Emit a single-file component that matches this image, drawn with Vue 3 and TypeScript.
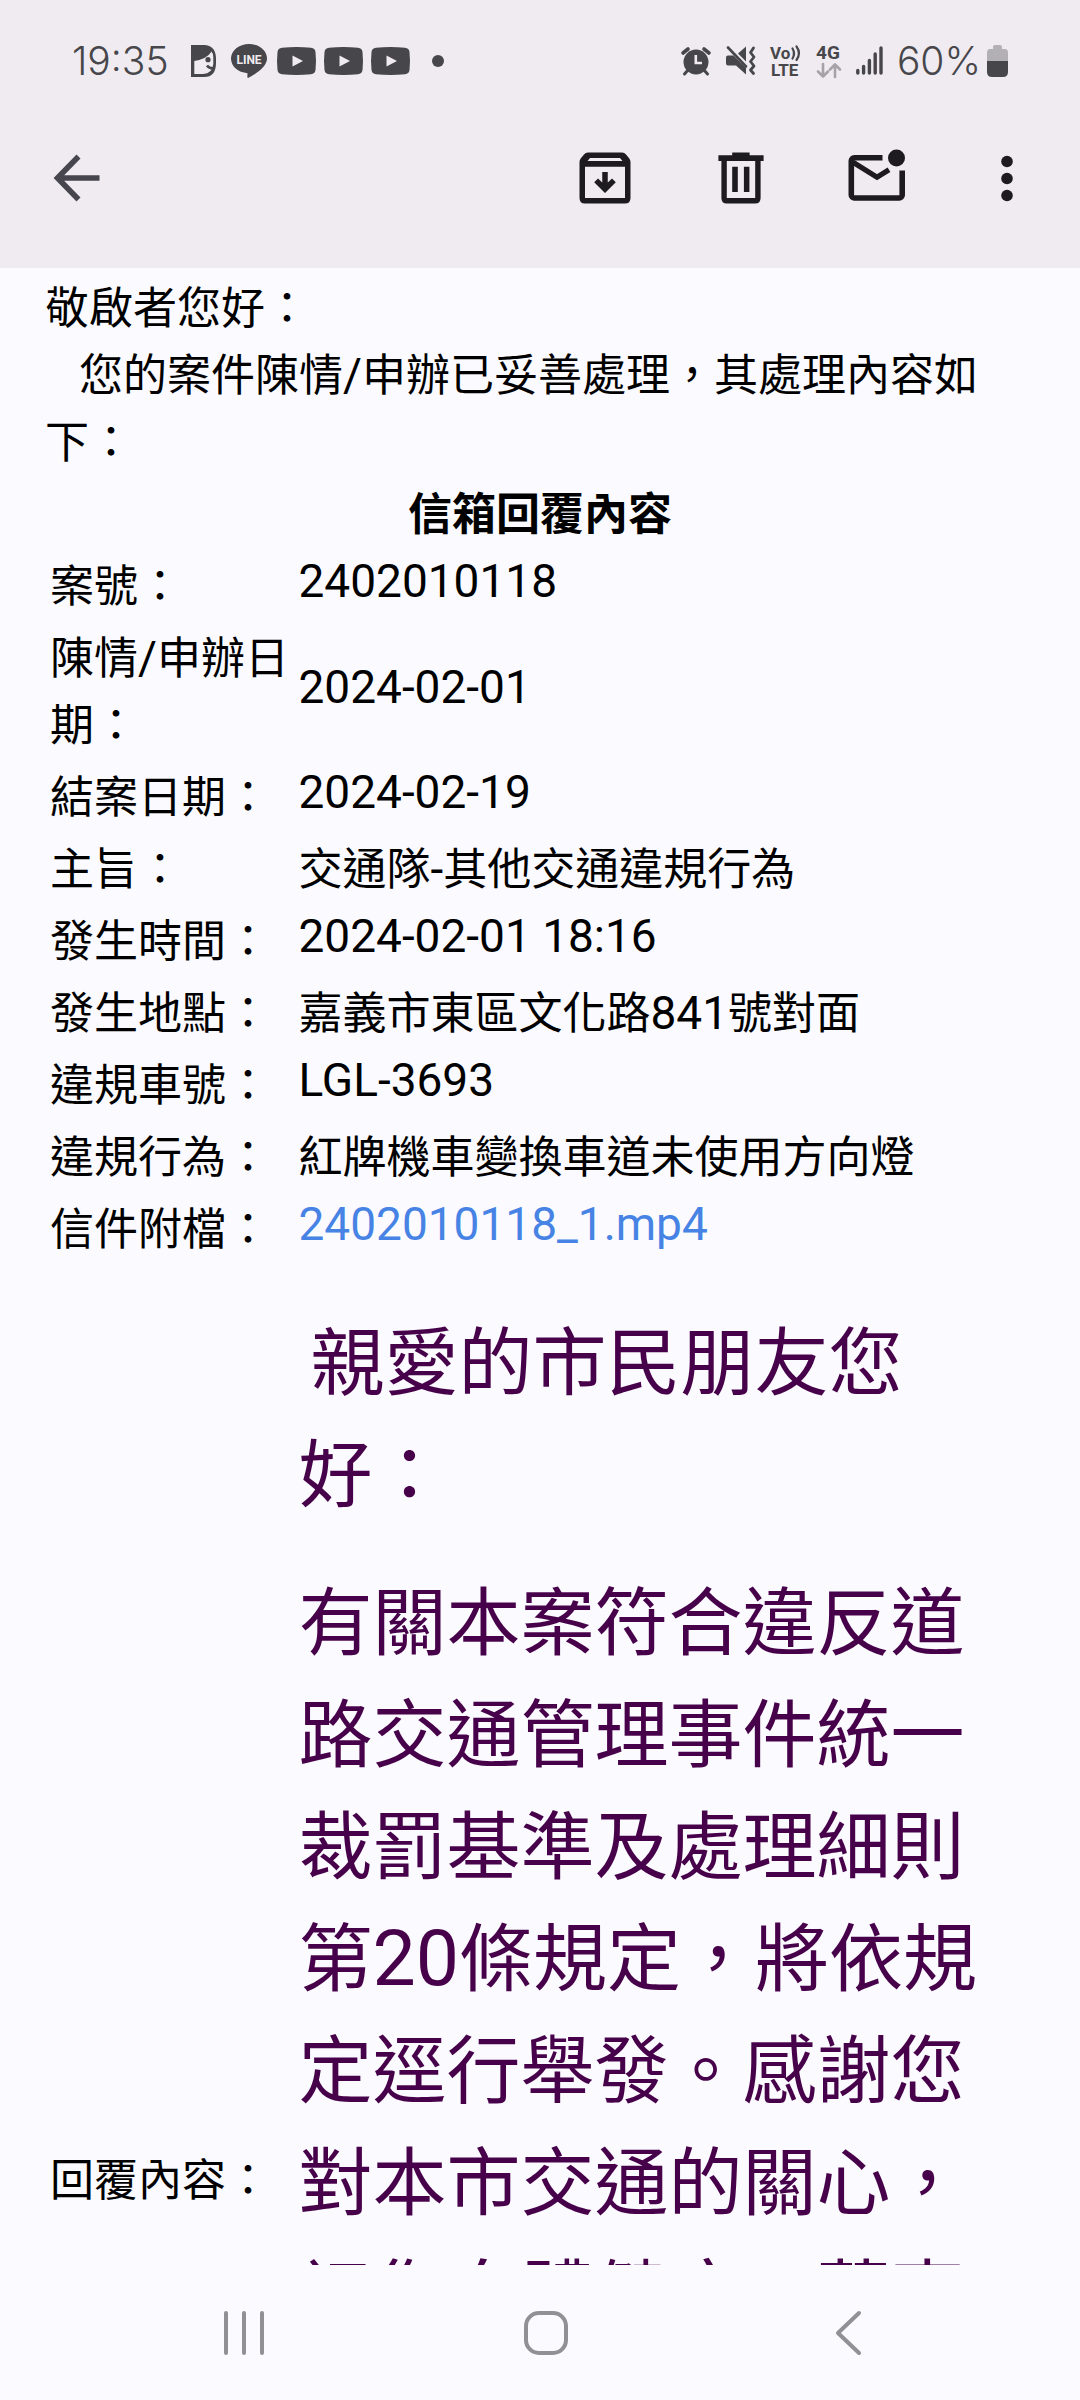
<script setup lang="ts">
interface Run {
  text: string
  latin: boolean
}

interface Field {
  label: string
  value: string
  href?: string
}

const greeting = '敬啟者您好：'
const intro = '您的案件陳情/申辦已妥善處理，其處理內容如下：'
const title = '信箱回覆內容'

const fields: Field[] = [
  { label: '案號：', value: '2402010118' },
  { label: '陳情/申辦日期：', value: '2024-02-01' },
  { label: '結案日期：', value: '2024-02-19' },
  { label: '主旨：', value: '交通隊-其他交通違規行為' },
  { label: '發生時間：', value: '2024-02-01 18:16' },
  { label: '發生地點：', value: '嘉義市東區文化路841號對面' },
  { label: '違規車號：', value: 'LGL-3693' },
  { label: '違規行為：', value: '紅牌機車變換車道未使用方向燈' },
  { label: '信件附檔：', value: '2402010118_1.mp4', href: '#attachment' },
]

const reply: string[] = [
  '親愛的市民朋友您好：',
  '有關本案符合違反道路交通管理事件統一裁罰基準及處理細則第20條規定，將依規定逕行舉發。感謝您對本市交通的關心，祝您身體健康，萬事如意。',
]

// Latin letters and digits are set one step larger than the Han text around them.
function runs(text: string): Run[] {
  const parts = text.match(/[\u0020-\u00ff]+|[^\u0020-\u00ff]+/g) ?? []
  return parts.map((part) => ({ text: part, latin: isLatin(part) }))
}

function isLatin(text: string): boolean {
  return /^[\u0020-\u00ff]+$/.test(text)
}
</script>

<template>
  <div class="screen">
    <header class="top">
      <div class="status">
        <div class="status-left">
          <time class="clock">19:35</time>
          <svg class="face" width="25" height="32" viewBox="0 0 25 32">
            <path d="M0 0H14Q25 1 25 14V18Q25 32 13 32H0Z" fill="#47464b" />
            <path d="M20.5 6.500Q16 14 3.300 16V29H12Q21.500 28.500 22.300 19V12Q22 8 20.500 6.500Z" fill="#efebf0" />
            <circle cx="17" cy="14.700" r="2.600" fill="#47464b" />
            <path d="M16 20.500Q18 23.300 22 23.300" fill="none" stroke="#47464b" stroke-width="2.600" />
          </svg>
          <svg class="line" width="36" height="34" viewBox="0 0 36 34">
            <path d="M18 0C28 0 36 6.500 36 14.600C36 22 27 29 17 34C16 34 16.500 31 16.500 29.200C7 28.500 0 22.500 0 14.600C0 6.500 8 0 18 0Z" fill="#47464b" />
            <text x="18" y="20" text-anchor="middle" font-size="12" font-weight="700" fill="#efebf0">LINE</text>
          </svg>
          <div class="tubes">
            <svg v-for="n in 3" :key="n" width="39" height="28" viewBox="0 0 39 28">
              <path d="M5 .8Q19.500-.8 34 .8Q38 1.200 38.500 5Q39.500 14 38.500 23Q38 26.800 34 27.200Q19.500 28.800 5 27.200Q1 26.800.5 23Q-.5 14 .5 5Q1 1.200 5 .8Z" fill="#47464b" />
              <path d="M15.500 8.500L26 14L15.500 19.500Z" fill="#efebf0" />
            </svg>
          </div>
          <svg class="dot" width="12" height="12" viewBox="0 0 12 12"><circle cx="6" cy="6" r="6" fill="#47464b" /></svg>
        </div>
        <div class="status-right">
          <svg width="30" height="28" viewBox="0 0 30 28">
            <circle cx="15" cy="15" r="12.500" fill="#47464b" />
            <path d="M2 6L7 2M28 6L23 2" stroke="#47464b" stroke-width="3.600" stroke-linecap="round" />
            <path d="M7 23L3.500 27M23 23L26.500 27" stroke="#47464b" stroke-width="3" stroke-linecap="round" />
            <path d="M14.800 8V16H21" fill="none" stroke="#efebf0" stroke-width="2.600" />
          </svg>
          <svg width="31" height="29" viewBox="0 0 31 29">
            <path d="M1 11.500Q1 9.500 3 9.500H8.500L21 22V28.500L11 19.500H3Q1 19.500 1 17.500Z" fill="#47464b" />
            <path d="M13 7.500L21 .5V15.500Z" fill="#47464b" />
            <path d="M3 1.500L21 20.500" stroke="#47464b" stroke-width="2.600" stroke-linecap="round" />
            <path d="M28.500 2L25.500 6.500L29 11L25.500 15.500L29 20L25.500 24L28.500 27.500" fill="none" stroke="#47464b" stroke-width="2.800" stroke-linejoin="round" stroke-linecap="round" />
          </svg>
          <svg width="32" height="32" viewBox="0 0 32 32">
            <text x="0" y="14" font-size="17" font-weight="700" fill="#47464b">Vo</text>
            <path d="M22.500 3.500Q25.500 8.500 22.500 13.500M26.500 1.500Q31.500 8.500 26.500 15" fill="none" stroke="#47464b" stroke-width="2.200" stroke-linecap="round" />
            <text x="1" y="31" font-size="17" font-weight="700" fill="#47464b">LTE</text>
          </svg>
          <svg width="26" height="34" viewBox="0 0 26 34">
            <text x="0" y="15" font-size="19" font-weight="700" fill="#47464b">4G</text>
            <path d="M7 20V32M2 27.500L7 32.500L12 27.500M19 33V21M14 25.500L19 20.500L24 25.500" fill="none" stroke="#a5a3a8" stroke-width="2.600" stroke-linecap="round" stroke-linejoin="round" />
          </svg>
          <svg width="27" height="29" viewBox="0 0 27 29">
            <path d="M1.800 24.500V27M7.600 20.500V27M13.400 14.500V27M19.200 8V27M25 2V27" fill="none" stroke="#47464b" stroke-width="3.400" stroke-linecap="round" />
          </svg>
          <div class="power">
            <span class="percent">60%</span>
            <svg width="21" height="32" viewBox="0 0 21 32">
              <path d="M6 2Q6 0 8 0H13Q15 0 15 2V4H18Q21 4 21 8V16H0V8Q0 4 3 4H6Z" fill="#b3b0b5" />
              <path d="M0 16H21V27Q21 32 16 32H5Q0 32 0 27Z" fill="#47464b" />
            </svg>
          </div>
        </div>
      </div>

      <nav class="appbar" aria-label="郵件操作">
        <button type="button" aria-label="返回">
          <svg width="66" height="66" viewBox="0 0 66 66">
            <path d="M55.500 33H15M34.500 11.500L13.500 33L34.500 54.500" fill="none" stroke="#47464f" stroke-width="5.600" />
          </svg>
        </button>
        <div class="actions">
          <button type="button" aria-label="封存">
            <svg width="66" height="66" viewBox="0 0 66 66" fill="#1d1b20">
              <path fill-rule="evenodd" d="M16 7.500H50Q52.500 7.500 54 9.500L57.300 13.500Q58.500 15 58.500 17V53Q58.500 58.500 53 58.500H13Q7.500 58.500 7.500 53V17Q7.500 15 8.700 13.500L12 9.500Q13.500 7.500 16 7.500ZM15.500 16H50.500L48 13H18ZM13 21.800V53H53V21.800Z" />
              <path d="M30.250 27H35.750V37.500L40 33.500L43.800 37.300L33 48L22.200 37.300L26 33.500L30.250 37.500Z" />
            </svg>
          </button>
          <button type="button" aria-label="刪除">
            <svg width="66" height="66" viewBox="0 0 66 66" fill="#1d1b20">
              <path fill-rule="evenodd" d="M10.400 10.200H24.200V7.500H41.600V10.200H55.600V16H52.600V53Q52.600 58.500 47.200 58.500H18.800Q13.400 58.500 13.400 53V16H10.400ZM18.800 16V53H47.200V16Z" />
              <path d="M24.200 21.700H29.800V47H24.200ZM35.900 21.700H41.400V47H35.900Z" />
            </svg>
          </button>
          <button type="button" aria-label="標示為未讀">
            <svg width="66" height="66" viewBox="0 0 66 66">
              <path d="M38.500 12.800H10.300a3 3 0 0 0-3 3V50a3 3 0 0 0 3 3H55.200a3 3 0 0 0 3-3V25.500" fill="none" stroke="#1d1b20" stroke-width="5.600" />
              <path d="M9 17.300L33 32.300L45 24.800" fill="none" stroke="#1d1b20" stroke-width="5.200" />
              <circle cx="52.500" cy="13" r="8.500" fill="#1d1b20" />
            </svg>
          </button>
          <button type="button" class="more" aria-label="更多選項">
            <svg width="54" height="66" viewBox="0 0 54 66" fill="#1d1b20">
              <circle cx="27" cy="16.500" r="5.800" />
              <circle cx="27" cy="33.500" r="5.800" />
              <circle cx="27" cy="50.500" r="5.800" />
            </svg>
          </button>
        </div>
      </nav>
    </header>

    <main class="mail">
      <p class="greeting">{{ greeting }}</p>
      <p class="intro"><span v-for="(run, i) in runs(intro)" :key="i" :class="{ latin: run.latin }">{{ run.text }}</span></p>

      <table class="case">
        <colgroup>
          <col class="label-column" />
          <col />
        </colgroup>
        <thead>
          <tr>
            <th colspan="2" class="title">{{ title }}</th>
          </tr>
        </thead>
        <tbody>
          <tr v-for="field in fields" :key="field.label">
            <th scope="row" class="label"><span v-for="(run, i) in runs(field.label)" :key="i" :class="{ latin: run.latin }">{{ run.text }}</span></th>
            <td v-if="isLatin(field.value)" class="latin-only">
              <a v-if="field.href" :href="field.href">{{ field.value }}</a>
              <template v-else>{{ field.value }}</template>
            </td>
            <td v-else><span v-for="(run, i) in runs(field.value)" :key="i" :class="{ latin: run.latin }">{{ run.text }}</span></td>
          </tr>
          <tr class="reply-row">
            <th scope="row" class="label">回覆內容：</th>
            <td class="reply">
              <p v-for="(paragraph, p) in reply" :key="p"><span v-for="(run, i) in runs(paragraph)" :key="i" :class="{ latin: run.latin }">{{ run.text }}</span></p>
            </td>
          </tr>
        </tbody>
      </table>
    </main>

    <nav class="system" aria-label="系統導覽">
      <button type="button" aria-label="最近使用">
        <svg width="48" height="48" viewBox="0 0 48 48">
          <path d="M6 4V44M24 4V44M42 4V44" fill="none" stroke="#919095" stroke-width="4" stroke-linecap="round" />
        </svg>
      </button>
      <button type="button" aria-label="主畫面">
        <svg width="48" height="48" viewBox="0 0 48 48">
          <rect x="4" y="4" width="40" height="40" rx="13" fill="none" stroke="#919095" stroke-width="4" />
        </svg>
      </button>
      <button type="button" aria-label="上一頁">
        <svg width="48" height="48" viewBox="0 0 48 48">
          <path d="M35 4L14 24L35 44" fill="none" stroke="#919095" stroke-width="4" stroke-linecap="round" stroke-linejoin="round" />
        </svg>
      </button>
    </nav>
  </div>
</template>

<style>
body {
  background: #fafaff;
}
</style>

<style scoped>
.screen {
  display: flex;
  flex-direction: column;
  height: 100vh;
  overflow: hidden;
  background: #fafaff;
  color: #000;
  font-family: "Noto Sans CJK TC", sans-serif;
}

svg {
  display: block;
  flex: none;
  overflow: visible;
}

svg text {
  font-family: Roboto, sans-serif;
}

button {
  padding: 0;
  border: 0;
  background: none;
}

.top {
  flex: none;
  padding-bottom: 34px;
  background: #efebf0;
}

.status {
  display: flex;
  justify-content: space-between;
  align-items: center;
  height: 121px;
  padding: 0 72px;
  color: #47464b;
}

.status-left,
.status-right,
.tubes,
.power,
.actions {
  display: flex;
  align-items: center;
}

.clock,
.percent {
  font-family: Inter, sans-serif;
  font-size: 39px;
  font-weight: 300;
  line-height: 48px;
}

.face {
  margin-left: 22px;
}

.line {
  margin-left: 15px;
}

.tubes {
  gap: 8px;
  margin-left: 10px;
}

.dot {
  margin-left: 22px;
}

.status-right {
  gap: 14px;
}

.power {
  gap: 6px;
}

.appbar {
  display: flex;
  justify-content: space-between;
  align-items: center;
  height: 113px;
  padding: 0 46px 0 44px;
}

.actions {
  gap: 70px;
}

.mail {
  flex: 1;
  min-height: 0;
  overflow: hidden;
  padding: 4px 45px 0;
  font-size: 44px;
  line-height: 67px;
}

p {
  margin: 0;
}

.intro {
  text-indent: 34px;
}

.latin {
  font-family: Roboto, sans-serif;
  font-size: 46px;
  line-height: 1;
}

.case {
  width: 100%;
  margin-top: 1px;
  border-collapse: collapse;
  table-layout: fixed;
}

.label-column {
  width: 25%;
}

th,
td {
  padding: 4px 6px 1px;
  text-align: left;
  vertical-align: middle;
}

.latin-only {
  padding: 2px 6px 3px;
  font-family: Roboto, sans-serif;
  font-size: 46px;
}

.title {
  text-align: center;
  font-weight: 700;
}

.label {
  padding-right: 0;
  padding-left: 5px;
  font-weight: 400;
}

a {
  color: #4683e4;
  text-decoration: none;
}

.reply-row {
  height: 1829px;
}

.reply {
  padding-right: 54px;
  vertical-align: top;
  color: #47004a;
  font-size: 74px;
  line-height: 112px;
}

.reply p {
  margin: 36px 0;
}

.reply p:first-child {
  text-indent: 12px;
}

.reply .latin {
  font-size: 77px;
}

.system {
  display: flex;
  flex: none;
  justify-content: center;
  align-items: center;
  gap: 254px;
  height: 135px;
  padding-left: 12px;
}
</style>
